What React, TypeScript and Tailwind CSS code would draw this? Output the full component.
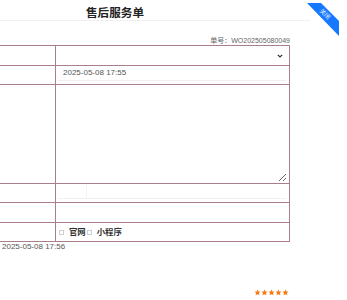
import React from "react";

const sans = { fontFamily: '"Liberation Sans", "Noto Sans CJK SC", sans-serif' };

function Star() {
  return (
    <svg width="7" height="7" viewBox="0 0 24 24">
      <path d="M12 1.5l3.1 6.9 7.4.7-5.6 5 1.7 7.4L12 17.6l-6.6 3.9 1.7-7.4-5.6-5 7.4-.7z" fill="#f77b14" />
    </svg>
  );
}

function Box() {
  return <span className="inline-block w-[5px] h-[5px] border border-[#cfcfcf] bg-white" />;
}

export default function App() {
  return (
    <div className="relative w-[347px] h-[300px] bg-white overflow-hidden text-[#333]" style={sans}>
      {/* header */}
      <div className="h-[21px] w-[310px] border-b border-[#f0f0f0] pl-[86px]">
        <div className="pt-[6px] text-[11.6px] leading-[14px] font-semibold text-[#222]">售后服务单</div>
      </div>

      {/* number row */}
      <div className="h-[24px] w-[290px] flex items-end justify-end">
        <span className="text-[7px] leading-[8px] text-[#666]">单号：WO202505080049</span>
      </div>

      {/* table */}
      <div className="w-[290px] border-t border-r border-[#a97f8b]">
        <div className="grid grid-cols-[56px_1fr] h-[20px] border-b border-[#a97f8b]">
          <div className="border-r border-[#a97f8b]" />
          <div className="flex items-center justify-end pr-[6px]">
            <svg width="6" height="4" viewBox="0 0 6 4">
              <path d="M0.8 0.8L3 3L5.2 0.8" stroke="#333" strokeWidth="1.2" fill="none" />
            </svg>
          </div>
        </div>
        <div className="grid grid-cols-[56px_1fr] h-[19px] border-b border-[#a97f8b]">
          <div className="border-r border-[#a97f8b]" />
          <div className="pl-[2px] pr-[3px]">
            <div className="h-[15px] border-b border-[#f0f0f0] pl-[5px] text-[8px] leading-[14px] text-[#555]">
              2025-05-08 17:55
            </div>
          </div>
        </div>
        <div className="grid grid-cols-[56px_1fr] h-[99px] border-b border-[#a97f8b]">
          <div className="border-r border-[#a97f8b]" />
          <div className="pl-[1px] pr-[2px] flex">
            <textarea className="w-full h-[97px] border-0 outline-none bg-white text-[8px]" />
          </div>
        </div>
        <div className="grid grid-cols-[56px_1fr] h-[19px] border-b border-[#a97f8b]">
          <div className="border-r border-[#a97f8b]" />
          <div className="pl-[2px] pr-[3px]">
            <div className="h-[15px] border-b border-[#f0f0f0] flex">
              <div className="w-[29px] h-[13px] mt-[1px] border-r border-[#f4f4f4]" />
            </div>
          </div>
        </div>
        <div className="grid grid-cols-[56px_1fr] h-[20px] border-b border-[#a97f8b]">
          <div className="border-r border-[#a97f8b]" />
          <div />
        </div>
        <div className="grid grid-cols-[56px_1fr] h-[19px] border-b border-[#a97f8b]">
          <div className="border-r border-[#a97f8b]" />
          <div className="flex items-center pl-[3px] text-[8.4px] font-bold text-[#333]">
            <Box />
            <span className="ml-[5px]">官网</span>
            <span className="ml-[1px] flex"><Box /></span>
            <span className="ml-[5px]">小程序</span>
          </div>
        </div>
      </div>

      {/* bottom date */}
      <div className="pl-[2px] text-[8px] leading-[10px] text-[#555]">2025-05-08 17:56</div>

      {/* stars */}
      <div className="w-[289px] mt-[37px] flex justify-end">
        <Star />
        <Star />
        <Star />
        <Star />
        <Star />
      </div>

      {/* ribbon */}
      <div className="absolute left-[300px] top-0 w-[47px] h-[40px]">
        <svg width="47" height="40" viewBox="300 0 47 40" className="absolute left-0 top-0">
          <polygon points="307,3 321,3 339,21 339,36" fill="#1677ff" />
        </svg>
        <span
          className="absolute left-[19px] top-[11px] text-[6px] leading-[6px] text-white rotate-45"
          style={{ fontFamily: '"Noto Sans CJK SC", sans-serif' }}
        >
          关闭
        </span>
      </div>
    </div>
  );
}
